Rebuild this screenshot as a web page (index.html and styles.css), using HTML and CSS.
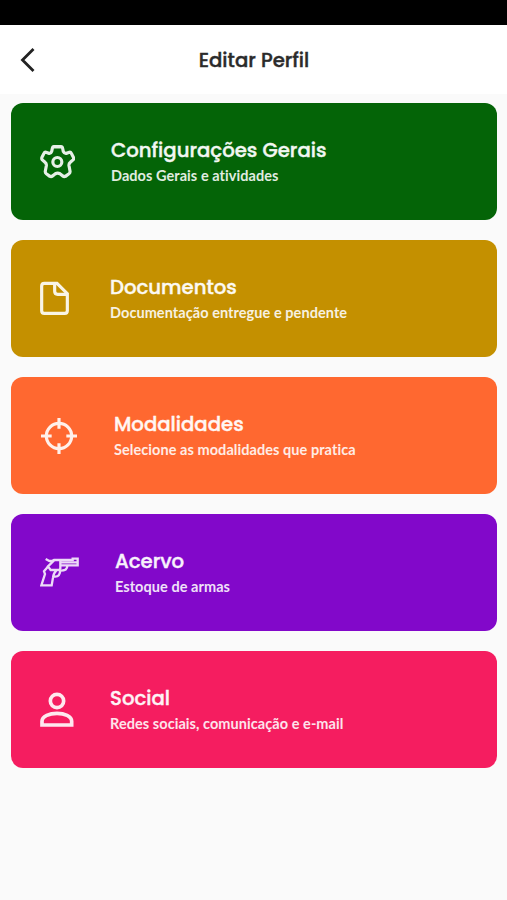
FILE: index.html
```
<!DOCTYPE html>
<html lang="pt-BR">
<head>
  <meta charset="UTF-8">
  <meta name="viewport" content="width=device-width, initial-scale=1">
  <title>Editar Perfil</title>
  <link rel="stylesheet" href="styles.css">
</head>
<body>

<div class="status-bar"></div>

<header class="header">
  <svg class="back" viewBox="0 0 16 26"><path d="M13.500 2 2.500 13l11 11"/></svg>
  <h1>Editar Perfil</h1>
</header>

<main class="menu">
  <div class="card green">
    <svg class="icon" width="35" height="35" viewBox="0 0 105 105">
      <path transform="translate(0 3) scale(1 1.04)" d="M41 5h22q4 0 5 5l2 9q3 6 9 5l9-3q4-1 6 3l6 11q2 5-1 8l-8 7q-5 4-4 10l3 15q1 5-3 8l-10 7q-5 2-9-1l-8-6q-7-4-14 0l-8 6q-4 3-9 1l-10-7q-4-3-3-8l3-15q1-6-4-10l-8-7q-3-3-1-8l6-11q2-4 6-3l9 3q6 1 8-5l2-9q1-5 4-5z"/>
      <circle cx="52" cy="54" r="13.500"/>
    </svg>
    <div class="text">
      <h2>Configurações Gerais</h2>
      <p>Dados Gerais e atividades</p>
    </div>
  </div>

  <div class="card gold">
    <svg class="icon" width="34" height="35" viewBox="0 0 102 105">
      <path d="M13 7h38l31 31v51q0 8-8 8H13q-8 0-8-8V15q0-8 8-8z"/>
      <path d="M44 7v24q0 9 9 9h29"/>
    </svg>
    <div class="text">
      <h2>Documentos</h2>
      <p>Documentação entregue e pendente</p>
    </div>
  </div>

  <div class="card orange">
    <svg class="icon" width="38" height="38" viewBox="0 0 114 114">
      <circle cx="57" cy="57" r="38"/>
      <path d="M57 3v32M57 79v32M3 57h32M79 57h32"/>
    </svg>
    <div class="text">
      <h2>Modalidades</h2>
      <p>Selecione as modalidades que pratica</p>
    </div>
  </div>

  <div class="card purple">
    <svg class="icon revolver" width="39" height="32" viewBox="0 0 117 96">
      <path d="M17 6l11 6M27 12h9l6-3h56V5h15v20H61"/>
      <path d="M42 10L24 28l8 11h26l3-5V9M61 16h50"/>
      <path d="M25 28L12 43l3 8L4 85h31l4-23q1-13 10-21M39 59h7q14 0 15-20M82 26q0 15-21 15"/>
    </svg>
    <div class="text">
      <h2>Acervo</h2>
      <p>Estoque de armas</p>
    </div>
  </div>

  <div class="card pink">
    <svg class="icon person" width="34" height="35" viewBox="0 0 102 105">
      <circle cx="51" cy="27" r="20"/>
      <path d="M6 99V88C6 72 29 64 51 64s44 8 44 24v11z"/>
    </svg>
    <div class="text">
      <h2>Social</h2>
      <p>Redes sociais, comunicação e e-mail</p>
    </div>
  </div>
</main>

</body>
</html>
```
FILE: styles.css
```
* {
  box-sizing: border-box;
}

body {
  margin: 0;
  min-height: 100vh;
  background: #fafafa;
  font-family: Lato, sans-serif;
}

h1, h2, p {
  margin: 0;
}

.status-bar {
  height: 25px;
  background: #000;
}

.header {
  display: grid;
  grid-template-columns: 40px 1fr 40px;
  align-items: center;
  height: 69px;
  background: #fff;
}

.back {
  width: 16px;
  height: 26px;
  margin-left: 20px;
  fill: none;
  stroke: #222;
  stroke-width: 2.8;
}

.header h1 {
  padding-left: 1px;
  color: #2b2b2b;
  font: 500 19.7px/28px Poppins, Inter, sans-serif;
  text-align: center;
  -webkit-text-stroke: 0.4px;
}

.menu {
  display: flex;
  flex-direction: column;
  gap: 20px;
  padding: 9.4px 10px 0 11px;
}

.card {
  display: flex;
  align-items: center;
  gap: 36px;
  height: 117px;
  padding-left: 29px;
  border-radius: 12px;
  color: #fff;
}

.green { background: #046407; }
.gold { background: #c49000; }
.orange { background: #ff6830; }
.purple { background: #8208ca; }
.pink { background: #f51d60; }

.icon {
  flex: none;
  fill: none;
  stroke: #fff;
  stroke-width: 9.5;
  opacity: 0.9;
}

.revolver {
  stroke-width: 7;
  opacity: 0.85;
}

.person {
  stroke-width: 11;
}

.text {
  padding-top: 1px;
  white-space: nowrap;
}

.text h2 {
  font: 500 19.7px/28px Poppins, Inter, sans-serif;
  opacity: 0.95;
  -webkit-text-stroke: 0.4px;
}

.text p {
  font-size: 14.5px;
  font-weight: 700;
  line-height: 24px;
  letter-spacing: 0.06px;
  opacity: 0.88;
}
```
